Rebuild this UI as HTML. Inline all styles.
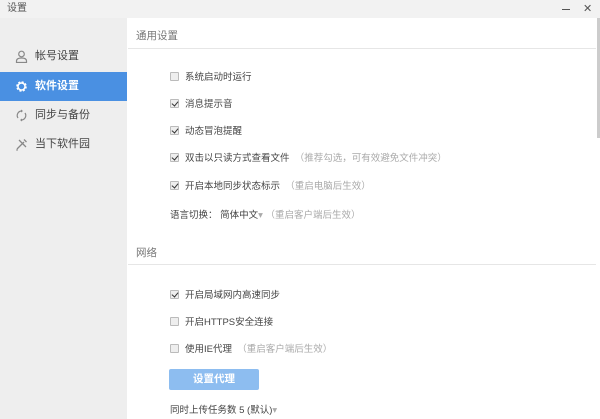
<!DOCTYPE html>
<html><head><meta charset="utf-8"><style>
*{margin:0;padding:0;box-sizing:border-box}
body{width:600px;height:419px;overflow:hidden;background:#fff;font-family:"Liberation Sans","Noto Sans CJK SC",sans-serif;font-size:10px;color:#333;position:relative}
.title{position:absolute;left:0;top:0;width:600px;height:18px;background:#f2f2f2;color:#555;font-size:10px;line-height:18px;padding-left:7px}
.side{position:absolute;left:0;top:18px;width:127px;height:401px;background:#eeeeee}
.it{position:absolute;left:0;width:127px;height:29px;line-height:29px;padding-left:35px;font-size:11px;color:#444}
.it.a{background:#4a90e2;color:#fff;font-weight:bold}
.ic{position:absolute;left:15px;top:8px;width:13px;height:13px}
.sec{position:absolute;left:136px;font-size:10.5px;color:#777}
.ln{position:absolute;left:128px;width:468px;height:1px;background:#e6e6e6}
.row{position:absolute;left:170px;font-size:9.5px;color:#444;line-height:12px}
.cb{display:inline-block;width:9px;height:9px;border:1px solid #bbb;background:#eee;vertical-align:-1px;margin-right:6px;position:relative;border-radius:1px}
.cb.c::after{content:"";position:absolute;left:2px;top:0px;width:3px;height:5px;border:solid #333;border-width:0 1.5px 1.5px 0;transform:rotate(40deg)}
.g{color:#aaa}
.btn{position:absolute;left:169px;top:369px;width:90px;height:21px;background:#8dbdf0;color:#fff;font-size:10.5px;text-align:center;line-height:21px;border-radius:2px;font-weight:bold}
.sb{position:absolute;left:597px;top:18px;width:3px;height:120px;background:#ccc}
</style></head><body>
<div class="title">设置</div>
<div style="position:absolute;left:562px;top:9px;width:8px;height:1px;background:#555"></div>
<div style="position:absolute;left:583px;top:2px;font-size:11px;color:#555">✕</div>
<div class="side">
<div class="it" style="top:24px"><svg class="ic" viewBox="0 0 13 13"><circle cx="6.5" cy="4" r="2.8" fill="none" stroke="#888" stroke-width="1.2"/><path d="M1.5 12.5v-1.5q0-3 5-3t5 3v1.5z" fill="none" stroke="#888" stroke-width="1.2"/></svg>帐号设置</div>
<div class="it a" style="top:54px"><svg class="ic" viewBox="0 0 13 13"><circle cx="6.5" cy="6.5" r="4.2" fill="none" stroke="#fff" stroke-width="2.2" stroke-dasharray="2 1.3"/><circle cx="6.5" cy="6.5" r="3.5" fill="none" stroke="#fff" stroke-width="1.5"/></svg>软件设置</div>
<div class="it" style="top:83px"><svg class="ic" viewBox="0 0 13 13"><path d="M3 9A4.5 4.5 0 0 1 6.5 2M10 4A4.5 4.5 0 0 1 6.5 11" fill="none" stroke="#888" stroke-width="1.2"/><path d="M6 0.5l2 1.5-2 1.5zM7 9.5l-2 1.5 2 1.5z" fill="#888"/></svg>同步与备份</div>
<div class="it" style="top:112px"><svg class="ic" viewBox="0 0 13 13"><path d="M2 11L9 4M4 2l7 7M9 1.5l2.5 2.5M1.5 11.5l1 1" stroke="#888" stroke-width="1.3" fill="none"/></svg>当下软件园</div>
</div>
<div class="sb"></div>
<div class="sec" style="top:28px">通用设置</div>
<div class="ln" style="top:48px"></div>
<div class="row" style="top:72px"><span class="cb"></span>系统启动时运行</div>
<div class="row" style="top:99px"><span class="cb c"></span>消息提示音</div>
<div class="row" style="top:126px"><span class="cb c"></span>动态冒泡提醒</div>
<div class="row" style="top:153px"><span class="cb c"></span>双击以只读方式查看文件 <span class="g">&nbsp;（推荐勾选，可有效避免文件冲突）</span></div>
<div class="row" style="top:181px"><span class="cb c"></span>开启本地同步状态标示 <span class="g">&nbsp;（重启电脑后生效）</span></div>
<div class="row" style="top:210px">语言切换： 简体中文<span class="g">▾ （重启客户端后生效）</span></div>
<div class="sec" style="top:245px">网络</div>
<div class="ln" style="top:264px"></div>
<div class="row" style="top:290px"><span class="cb c"></span>开启局域网内高速同步</div>
<div class="row" style="top:317px"><span class="cb"></span>开启HTTPS安全连接</div>
<div class="row" style="top:344px"><span class="cb"></span>使用IE代理 <span class="g">&nbsp;（重启客户端后生效）</span></div>
<div class="btn">设置代理</div>
<div class="row" style="top:405px">同时上传任务数 5 (默认)<span class="g">▾</span></div>
</body></html>
